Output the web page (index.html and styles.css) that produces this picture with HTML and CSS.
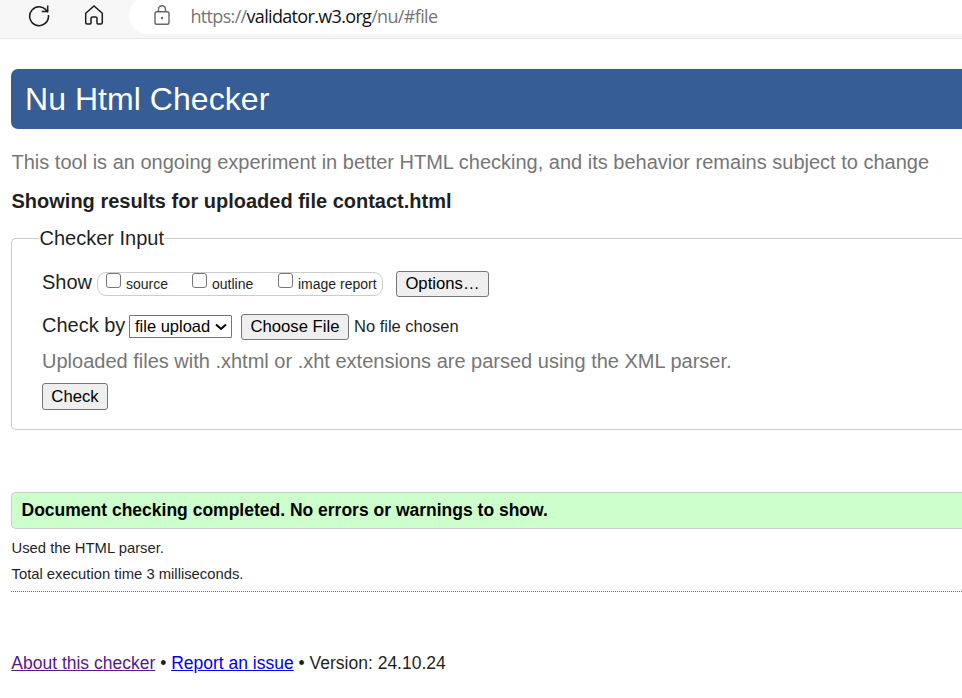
FILE: index.html
```html
<!DOCTYPE html>
<html lang="en">
<head>
<meta charset="utf-8">
<title>Nu Html Checker</title>
<link rel="stylesheet" href="styles.css">
</head>
<body>
<div class="toolbar">
  <svg class="reload" width="24" height="24" viewBox="0 0 24 24"><path d="M20.7 9.5A9.4 9.4 0 1 0 21.4 12M20.700 2.500V8.500H14.700"/></svg>
  <svg class="home" width="24" height="24" viewBox="0 0 24 24"><path d="M3.7 10.3 12 3l8.3 7.3V19.5q0 1.5-1.5 1.5H16q-1 0-1-1v-4.5q0-1.5-1.5-1.5h-3q-1.5 0-1.5 1.5V20q0 1-1 1H5.200q-1.500 0-1.500-1.500z"/></svg>
  <div class="address">
    <svg class="lock" width="18" height="22" viewBox="0 0 18 22"><rect x="2" y="7.800" width="14" height="12.400" rx="1.800"/><path d="M5.500 7.800V5.300a3.500 3.500 0 0 1 7 0v2.500"/><circle cx="9" cy="14" r="1.200"/></svg>
    <span class="url">https://<b>validator.w3.org</b>/nu/#file</span>
  </div>
</div>
<main>
  <h1>Nu Html Checker</h1>
  <p class="intro">This tool is an ongoing experiment in better HTML checking, and its behavior remains subject to change</p>
  <h2>Showing results for uploaded file contact.html</h2>
  <fieldset>
    <legend>Checker Input</legend>
    <div class="row show">
      <span class="label">Show</span>
      <div class="checks">
        <label><input type="checkbox"><span>source</span></label>
        <label><input type="checkbox"><span>outline</span></label>
        <label><input type="checkbox"><span>image report</span></label>
      </div>
      <button class="options">Options…</button>
    </div>
    <div class="row by">
      <span class="label">Check by</span>
      <div class="select">file upload<svg width="12" height="8" viewBox="0 0 12 8"><path d="M1 1.500 6 6l5-4.500"/></svg></div>
      <button class="choose">Choose File</button>
      <span class="nofile">No file chosen</span>
    </div>
    <p class="hint">Uploaded files with .xhtml or .xht extensions are parsed using the XML parser.</p>
    <button class="check">Check</button>
  </fieldset>
  <p class="success">Document checking completed. No errors or warnings to show.</p>
  <div class="stats">
    <p>Used the HTML parser.</p>
    <p>Total execution time 3 milliseconds.</p>
  </div>
  <footer><a class="visited" href="#about">About this checker</a> • <a href="#issue">Report an issue</a> • Version: 24.10.24</footer>
</main>
</body>
</html>
```
FILE: styles.css
```css
* { box-sizing: border-box; }
body { margin: 0; overflow: hidden; background: #fff; color: #1f1f1f; font-family: "Liberation Sans", Arial, sans-serif; }
h1, h2, p { margin: 0; font-weight: normal; white-space: nowrap; }
svg { fill: none; stroke: #1b1b1b; stroke-width: 1.5; flex: none; }
.toolbar { height: 39px; background: #f7f7f7; border-bottom: 1px solid #e8e8e8; display: flex; align-items: flex-start; }
.reload { margin: 3px 0 0 27px; }
.home { margin: 3px 0 0 31px; }
.address { margin-left: 23px; margin-top: -4px; height: 38px; flex: 1; background: #fff; border-radius: 19px 0 0 19px; display: flex; align-items: flex-start; }
.lock { margin: 8px 0 0 23.500px; stroke: #666; stroke-width: 1.4; }
.lock circle { fill: #666; stroke: none; }
.url { margin: 7.500px 0 0 20px; font: 18px/24px "Open Sans", "Noto Sans", sans-serif; color: #767676; letter-spacing: -0.670px; white-space: nowrap; }
.url b { font-weight: 400; color: #111; }
main { padding: 30px 0 0 11px; }
h1 { height: 60px; background: #365d95; color: #fff; border-radius: 7px 0 0 7px; padding-left: 14px; font-size: 32px; letter-spacing: 0.050px; line-height: 61px; }
.intro { margin-top: 18px; font-size: 20px; line-height: 30px; color: #767676; padding-left: 0.500px; }
h2 { margin-top: 12px; font-size: 20px; line-height: 24px; font-weight: bold; padding-left: 0.500px; }
fieldset { margin: 13px 0 0; height: 204px; border: 1px solid #ccc; border-right: 0; border-radius: 5px 0 0 5px; padding: 0 0 0 30px; }
legend { margin-left: -3px; padding: 0 0 0 0.500px; font-size: 20px; line-height: 24px; }
.row { display: flex; align-items: center; white-space: nowrap; }
.label { font-size: 20px; line-height: 26px; margin-top: -4px; }
.show { height: 26px; margin-top: 21px; }
.show .label { width: 55px; }
.checks { width: 286px; height: 24px; border: 1px solid #ccc; border-radius: 9px; display: flex; padding-left: 8px; }
.checks label { display: flex; align-items: flex-start; width: 86px; flex: none; }
input { appearance: none; width: 15px; height: 15px; margin: 0 5px 0 0; border: 1px solid #767676; border-radius: 3px; background: #fff; flex: none; }
.checks span { font-size: 14px; line-height: 22px; }
button { height: 26px; padding: 0; font: 16.700px/22px "Liberation Sans", Arial, sans-serif; color: #000; background: #efefef; border: 1px solid #767676; border-radius: 3px; white-space: nowrap; }
.options { width: 93px; margin-left: 13px; }
.by { height: 26px; margin-top: 17px; }
.by .label { width: 87px; }
.select { width: 103px; height: 23px; margin-top: -1px; border: 1px solid #767676; border-radius: 1px; display: flex; align-items: center; font-size: 16.500px; color: #000; padding-left: 5px; }
.select svg { margin-left: 5px; stroke: #000; stroke-width: 2; }
.choose { width: 108px; margin-left: 9px; }
.nofile { margin-left: 5px; margin-top: -2px; font-size: 16.500px; }
.hint { margin-top: 8px; font-size: 20px; line-height: 26px; color: #767676; }
.check { display: block; width: 66px; height: 27px; margin-top: 9px; }
.success { margin-top: 62px; height: 37px; border: 1px solid #ccc; border-right: 0; border-radius: 5px 0 0 5px; background: #cfc; color: #000; font-size: 17.500px; font-weight: bold; line-height: 35px; padding-left: 9.500px; }
.stats { height: 63px; padding-top: 6px; border-bottom: 1px dotted #666; font-size: 14.800px; line-height: 26px; }
.stats p { padding-left: 0.500px; }
footer { margin-top: 58px; padding-left: 0.300px; font-size: 17.500px; line-height: 26px; white-space: nowrap; }
a { color: #00e; }
.visited { color: #551a8b; }
```
